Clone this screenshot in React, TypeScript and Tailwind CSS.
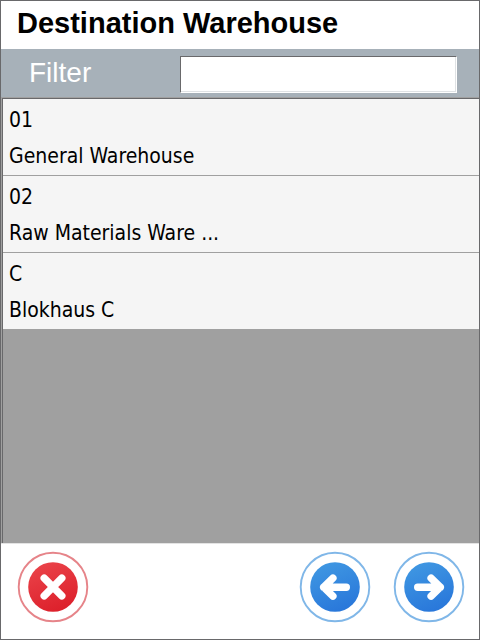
import type { ReactNode } from "react";

const warehouses = [
  { code: "01", name: "General Warehouse" },
  { code: "02", name: "Raw Materials Ware ..." },
  { code: "C", name: "Blokhaus C" },
];

type RoundButtonProps = {
  label: string;
  id: string;
  ring: string;
  from: string;
  to: string;
  children: ReactNode;
};

function RoundButton({ label, id, ring, from, to, children }: RoundButtonProps) {
  return (
    <button type="button" aria-label={label} className="size-18 rounded-full">
      <svg viewBox="0 0 72 72" className="size-18" fill="none">
        <defs>
          <linearGradient id={id} x1="0.3" y1="0" x2="0.7" y2="1">
            <stop offset="0" stopColor={from} />
            <stop offset="1" stopColor={to} />
          </linearGradient>
        </defs>
        <circle cx="36" cy="36" r="34.3" stroke={ring} strokeWidth="1.9" />
        <circle cx="36" cy="36" r="24.8" fill={`url(#${id})`} />
        <g stroke="#fff" strokeWidth="7.4" strokeLinecap="round" strokeLinejoin="round">
          {children}
        </g>
      </svg>
    </button>
  );
}

export default function App() {
  return (
    <main className="flex min-h-screen flex-col border border-[#69696b] bg-white font-['Liberation_Sans',Arial,sans-serif]">
      <h1 className="flex h-12 items-center px-4 pb-0.5 text-[29px] font-bold text-black">
        Destination Warehouse
      </h1>

      <div className="flex h-12 items-center bg-[#a7b1b9] pt-[3px] pr-[22px] pl-7">
        <label htmlFor="filter" className="w-[151px] pb-1 text-[28px] text-white">
          Filter
        </label>
        <input
          id="filter"
          type="text"
          className="h-[37px] min-w-0 flex-1 border border-t-[#69696b] border-r-white border-b-white border-l-[#69696b] bg-white px-2 text-[22px] text-black shadow-[inset_-1px_-1px_0_#dfe2e4] outline-none"
        />
      </div>

      <div className="flex flex-1 flex-col border-t border-l border-[#a0a0a0]">
        <ul className="flex-1 divide-y divide-[#a0a0a0] border-t border-l border-[#69696b] bg-[#a0a0a0] font-['DejaVu_Sans_Condensed','DejaVu_Sans',Tahoma,sans-serif] text-[21px] text-black">
          {warehouses.map((w) => (
            <li key={w.code} className="bg-[#f5f5f5] px-1.5 pt-[3px] pb-px">
              <p className="h-9 leading-9">{w.code}</p>
              <p className="h-9 leading-9">{w.name}</p>
            </li>
          ))}
        </ul>
      </div>

      <footer className="flex h-24 items-start border-t border-[#e3e3e3] pt-[7px] pr-3.5 pl-4">
        <RoundButton label="Cancel" id="red" ring="#e68489" from="#ea4249" to="#dc1f2a">
          <path d="M27.2 27.2 44.8 44.8M44.8 27.2 27.2 44.8" />
        </RoundButton>
        <div className="ml-auto flex gap-[22px]">
          <RoundButton label="Back" id="blueBack" ring="#80b7e8" from="#3f97e2" to="#2876da">
            <path d="M47.3 36.2H24.7M33.9 27.2 24.7 36.2 33.9 45.2" />
          </RoundButton>
          <RoundButton label="Next" id="blueNext" ring="#80b7e8" from="#3f97e2" to="#2876da">
            <path d="M24.7 36.2H47.3M38.1 27.2 47.3 36.2 38.1 45.2" />
          </RoundButton>
        </div>
      </footer>
    </main>
  );
}
